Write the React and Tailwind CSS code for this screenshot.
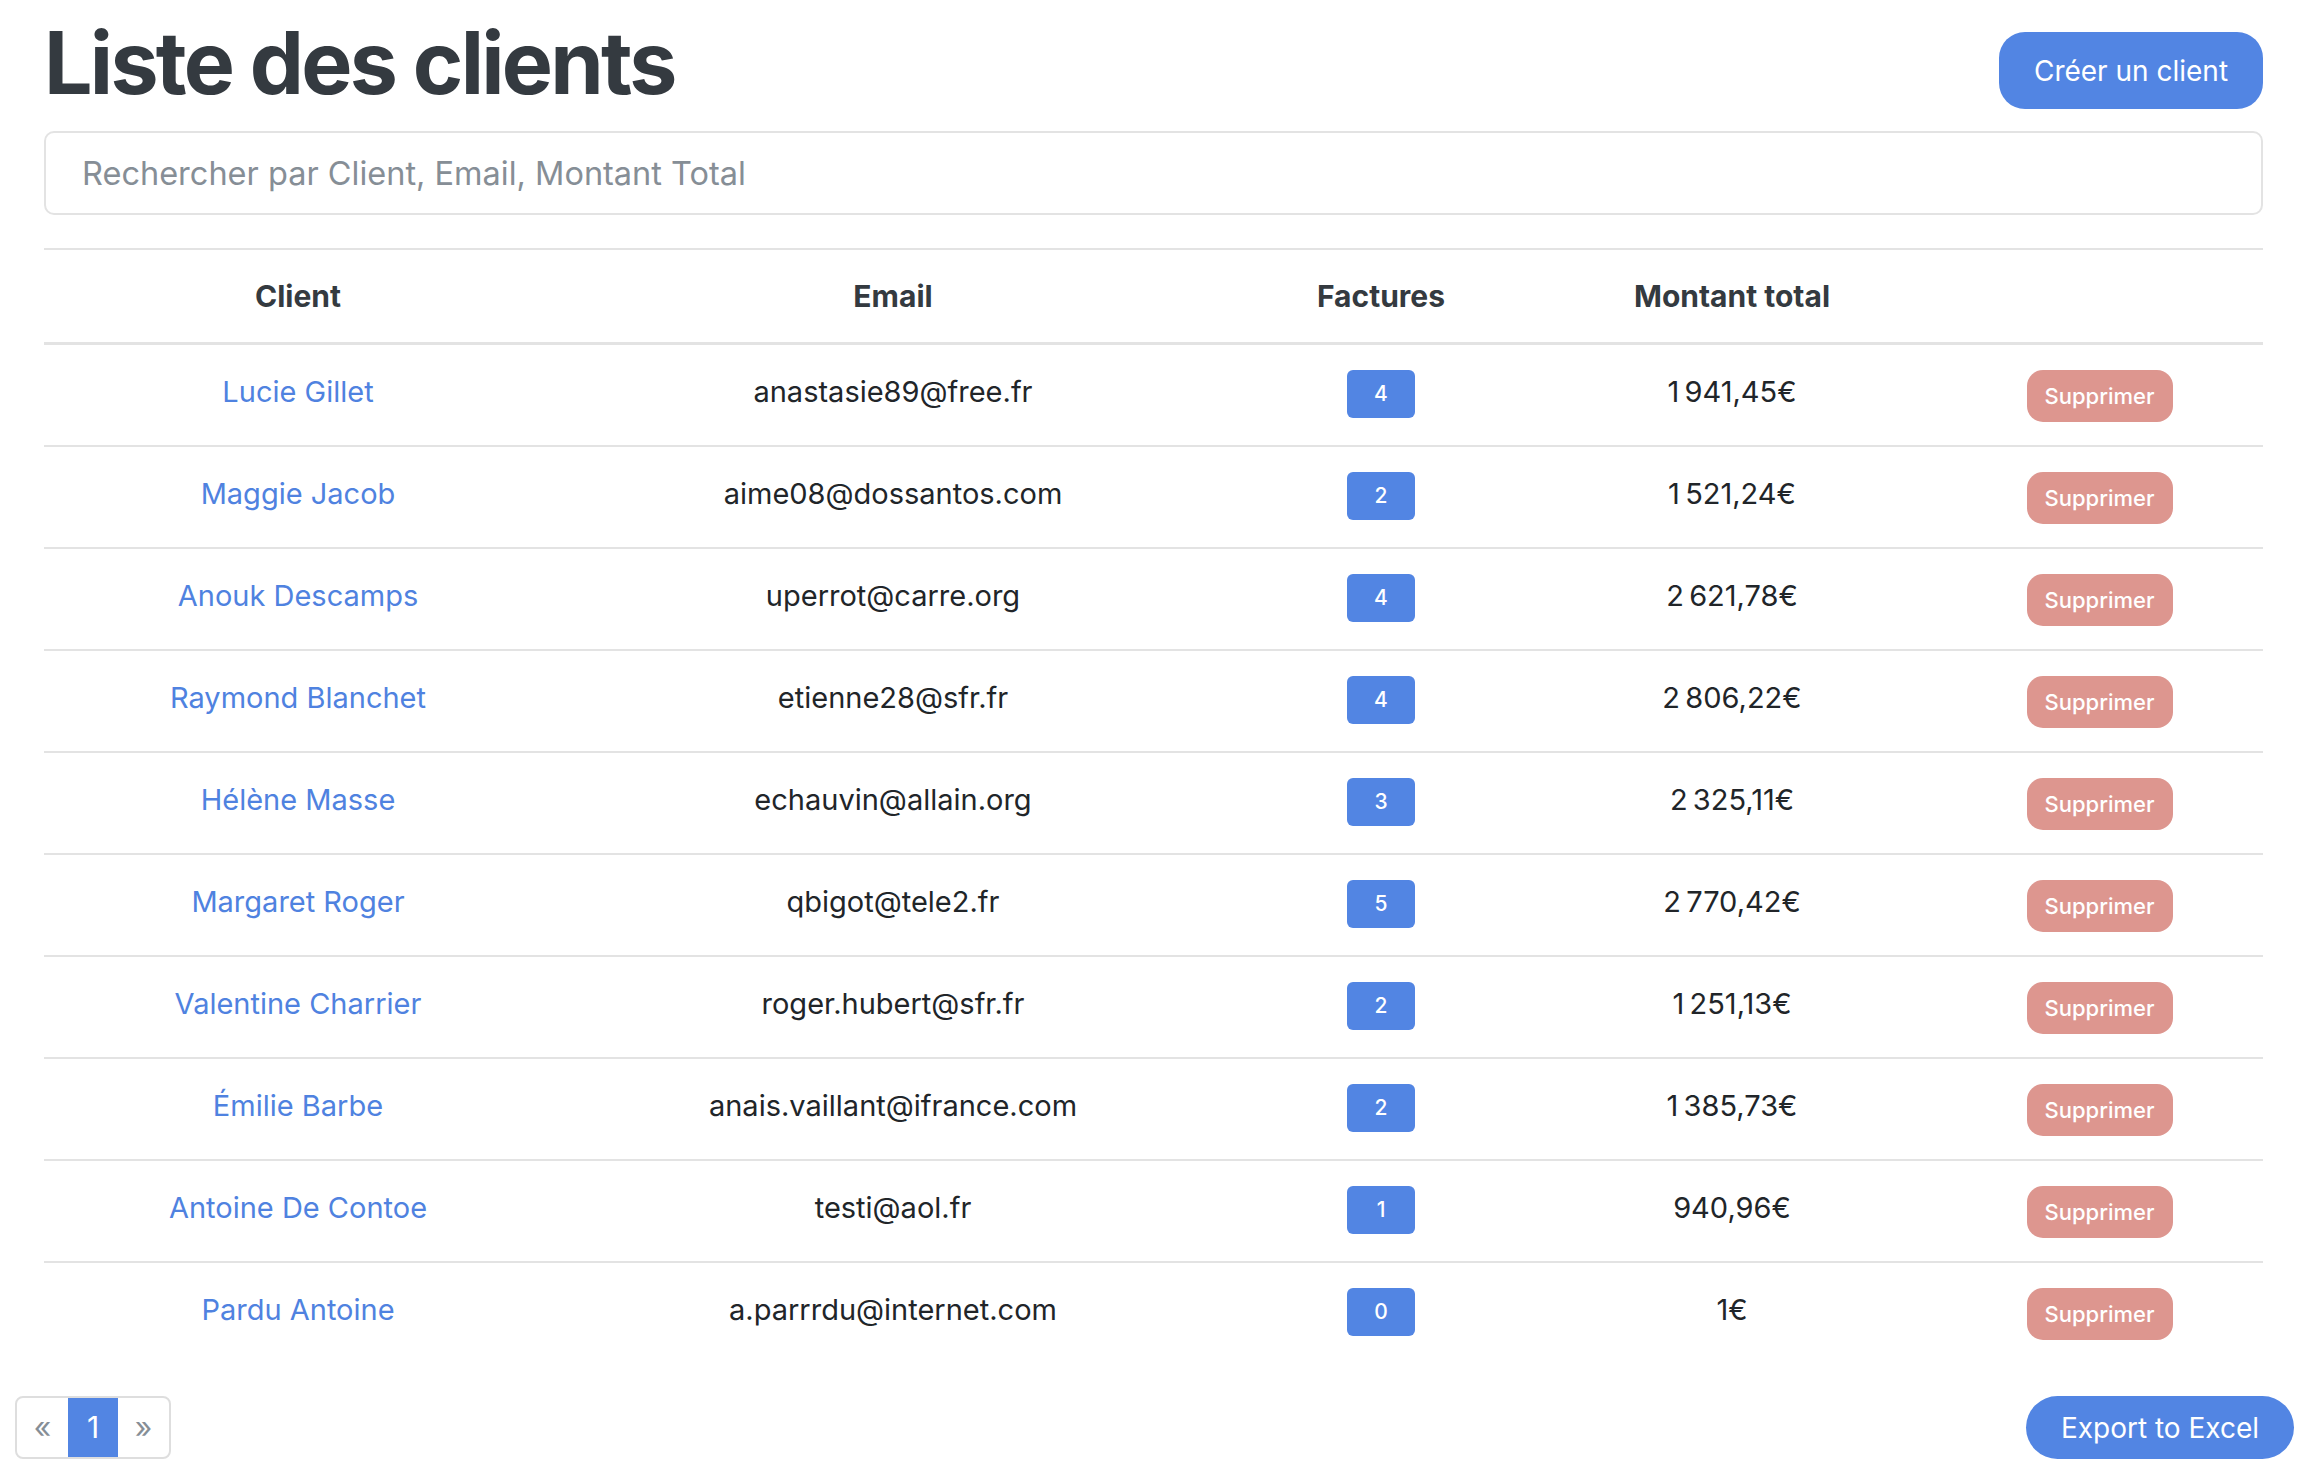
import React from 'react';

const clients = [
    ['Lucie Gillet', 'anastasie89@free.fr', 4, '1\u202f941,45€'],
    ['Maggie Jacob', 'aime08@dossantos.com', 2, '1\u202f521,24€'],
    ['Anouk Descamps', 'uperrot@carre.org', 4, '2\u202f621,78€'],
    ['Raymond Blanchet', 'etienne28@sfr.fr', 4, '2\u202f806,22€'],
    ['Hélène Masse', 'echauvin@allain.org', 3, '2\u202f325,11€'],
    ['Margaret Roger', 'qbigot@tele2.fr', 5, '2\u202f770,42€'],
    ['Valentine Charrier', 'roger.hubert@sfr.fr', 2, '1\u202f251,13€'],
    ['Émilie Barbe', 'anais.vaillant@ifrance.com', 2, '1\u202f385,73€'],
    ['Antoine De Contoe', 'testi@aol.fr', 1, '940,96€'],
    ['Pardu Antoine', 'a.parrrdu@internet.com', 0, '1€'],
];

const cols = 'grid grid-cols-[508px_682px_294px_408px_1fr] items-center text-center';

export default function App() {
    return (
        <div className="min-h-screen w-full bg-white text-[#212529] font-['Inter','Liberation_Sans',sans-serif]">
            <div className="pl-[44px] pr-[41px] pt-[12px]">
                <div className="flex items-start justify-between">
                    <h1 className="text-[86px] leading-[103px] font-bold tracking-[-0.032em] text-[#343a40]">
                        Liste des clients
                    </h1>
                    <button className="mt-[20px] h-[77px] w-[264px] rounded-[26px] bg-[#5285e3] text-[28px] text-white">
                        Créer un client
                    </button>
                </div>

                <input
                    type="text"
                    placeholder="Rechercher par Client, Email, Montant Total"
                    className="mt-[16px] block h-[84px] w-full rounded-[10px] border-2 border-[#e3e3e3] pl-[36px] text-[32.5px] outline-none placeholder:text-[#868e96]"
                />

                <div className="mt-[33px]">
                    <div className={`${cols} h-[97px] border-t-2 border-b-[3px] border-[#e3e3e3] text-[30px] font-bold text-[#343a40]`}>
                        <div>Client</div>
                        <div>Email</div>
                        <div>Factures</div>
                        <div>Montant total</div>
                        <div></div>
                    </div>
                    {clients.map(([name, email, count, total], i) => (
                        <div
                            key={name}
                            className={`${cols} pb-[6px] text-[29px] ${i < clients.length - 1 ? 'h-[102px] border-b-2 border-[#e3e3e3]' : 'h-[100px]'}`}
                        >
                            <div>
                                <a href="#" className="text-[#4f82e0]">{name}</a>
                            </div>
                            <div>{email}</div>
                            <div className="flex justify-center">
                                <span className="mt-[4px] flex h-[48px] w-[68px] items-center justify-center rounded-[6px] bg-[#5285e3] text-[21px] font-medium text-white">
                                    {count}
                                </span>
                            </div>
                            <div>{total}</div>
                            <div className="flex justify-center">
                                <button className="mt-[8px] h-[52px] w-[146px] rounded-[16px] bg-[#dd968f] text-[22px] font-medium text-white">
                                    Supprimer
                                </button>
                            </div>
                        </div>
                    ))}
                </div>
            </div>

            <div className="mt-[33px] flex items-center justify-between pl-[15px] pr-[10px]">
                <div className="flex h-[63px] overflow-hidden rounded-[8px] border-2 border-[#dedede]">
                    <span className="flex w-[51px] items-center justify-center text-[30px] text-[#868e96]">«</span>
                    <span className="flex w-[50px] items-center justify-center bg-[#5285e3] text-[30px] text-white">1</span>
                    <span className="flex w-[51px] items-center justify-center text-[30px] text-[#868e96]">»</span>
                </div>
                <button className="h-[63px] w-[268px] rounded-full bg-[#5285e3] text-[28px] text-white">
                    Export to Excel
                </button>
            </div>
        </div>
    );
}
